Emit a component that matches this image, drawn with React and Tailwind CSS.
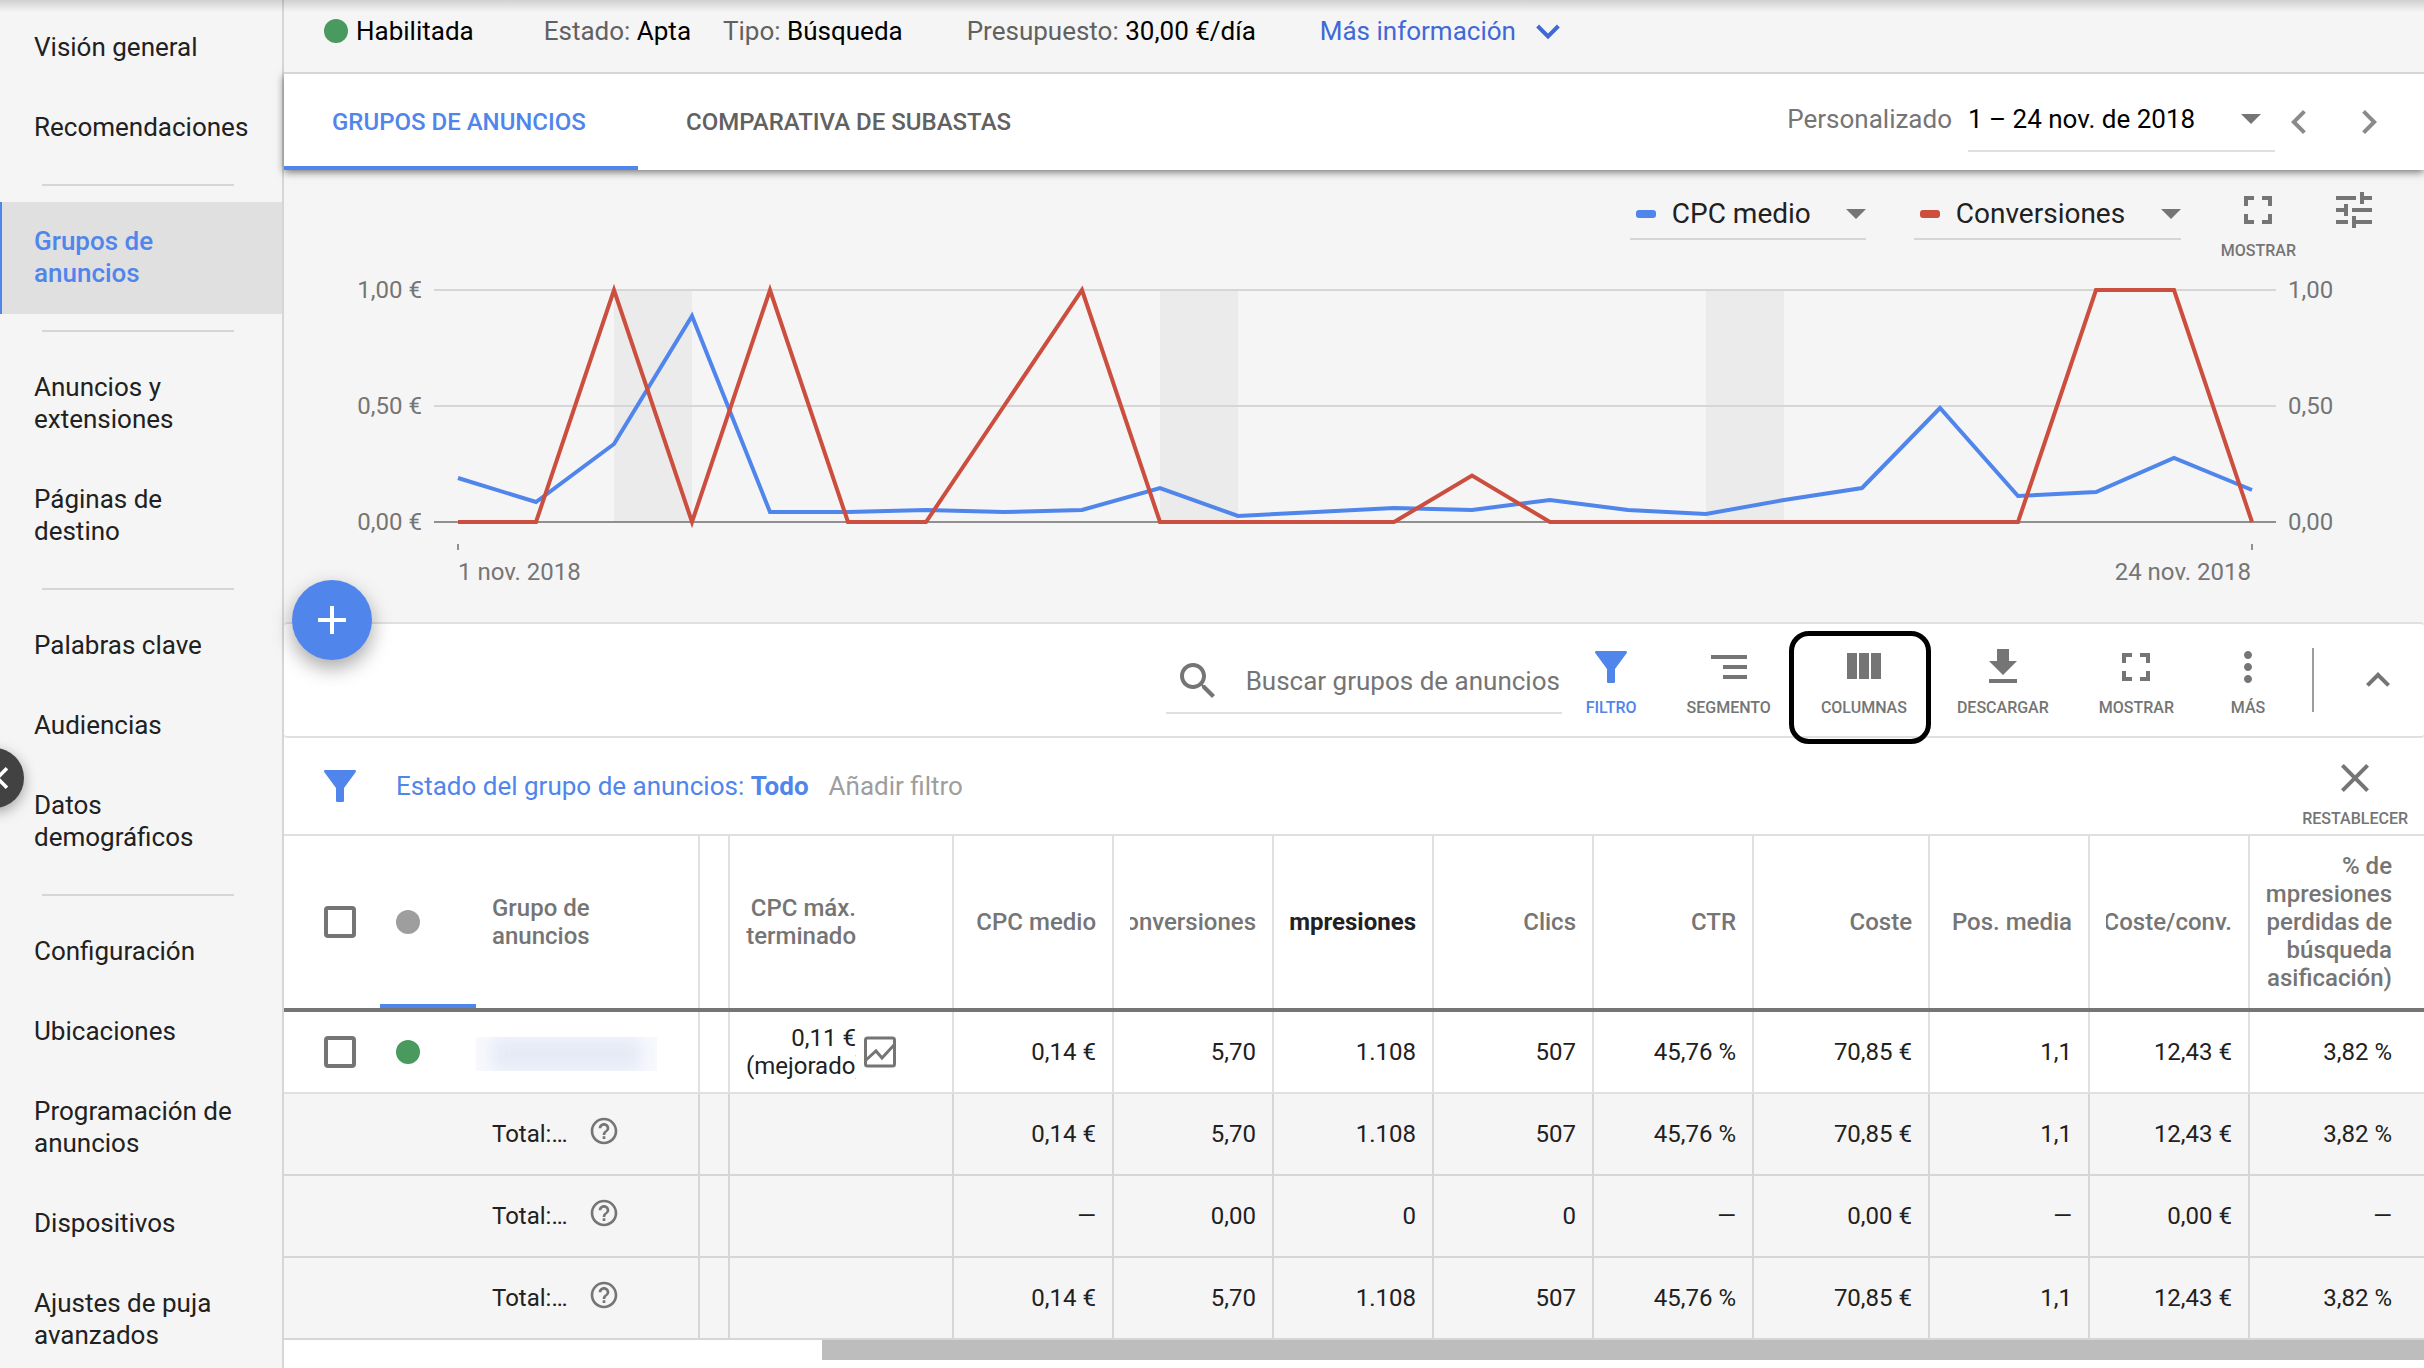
import React from 'react';

const icons = {
  tune: "M3 17v2h6v-2H3zM3 5v2h10V5H3zm10 16v-2h8v-2h-8v-2h-2v6h2zM7 9v2H3v2h4v2h2V9H7zm14 4v-2H11v2h10zm-6-4h2V7h4V5h-4V3h-2v6z",
  fullscreen: "M7 14H5v5h5v-2H7v-3zm-2-4h2V7h3V5H5v5zm12 7h-3v2h5v-5h-2v3zM14 5v2h3v3h2V5h-5z",
  search: "M15.5 14h-.79l-.28-.27C15.41 12.59 16 11.11 16 9.5 16 5.91 13.09 3 9.5 3S3 5.91 3 9.5 5.91 16 9.5 16c1.61 0 3.09-.59 4.23-1.57l.27.28v.79l5 4.99L20.49 19l-4.99-5zm-6 0C7.01 14 5 11.99 5 9.5S7.01 5 9.5 5 14 7.01 14 9.5 11.99 14 9.5 14z",
  help: "M11 18h2v-2h-2v2zm1-16C6.48 2 2 6.48 2 12s4.48 10 10 10 10-4.48 10-10S17.52 2 12 2zm0 18c-4.41 0-8-3.59-8-8s3.59-8 8-8 8 3.59 8 8-3.59 8-8 8zm0-14c-2.21 0-4 1.79-4 4h2c0-1.1.9-2 2-2s2 .9 2 2c0 2-3 1.75-3 5h2c0-2.25 3-2.5 3-5 0-2.21-1.79-4-4-4z",
  more: "M12 8c1.1 0 2-.9 2-2s-.9-2-2-2-2 .9-2 2 .9 2 2 2zm0 2c-1.1 0-2 .9-2 2s.9 2 2 2 2-.9 2-2-.9-2-2-2zm0 6c-1.1 0-2 .9-2 2s.9 2 2 2 2-.9 2-2-.9-2-2-2z",
  close: "M19 6.41L17.59 5 12 10.59 6.41 5 5 6.41 10.59 12 5 17.59 6.41 19 12 13.41 17.59 19 19 17.59 13.41 12z",
  left: "M15.41 7.41L14 6l-6 6 6 6 1.41-1.41L10.83 12z",
  right: "M10 6L8.59 7.41 13.17 12l-4.58 4.59L10 18l6-6z",
  up: "M7.41 15.41L12 10.83l4.59 4.58L18 14l-6-6-6 6z",
  add: "M19 13h-6v6h-2v-6H5v-2h6V5h2v6h6v2z",
  download: "M19 9h-4V3H9v6H5l7 7 7-7zM5 18v2h14v-2H5z",
  columns: "M3.500 5h5v13h-5zM9.500 5h5v13h-5zM15.500 5h5v13h-5z",
  segment: "M3 6h18v2H3zM9 11h12v2H9zM9 16h12v2H9z",
  filter: "M4.6 4h14.8c.6 0 .8.6.4 1.1L14 13v6.2c0 .5-.3.8-.8.8h-2.4c-.5 0-.8-.3-.8-.8V13L4.200 5.100C3.800 4.600 4 4 4.600 4z",
}

const Icon = ({ name, className = "size-12" }) => (
  <svg viewBox="0 0 24 24" fill="currentColor" className={`shrink-0 ${className}`} aria-hidden="true">
    <path d={icons[name]} />
  </svg>
)

const Triangle = () => (
  <svg viewBox="0 0 20 10" className="pointer-events-none absolute right-0 h-[10px] w-5" fill="#757575" aria-hidden="true">
    <path d="M0 0h20L10 10z" />
  </svg>
)

const menu = [
  ["Visión general", "Recomendaciones"],
  ["Grupos de anuncios"],
  ["Anuncios y extensiones", "Páginas de destino"],
  ["Palabras clave", "Audiencias", "Datos demográficos"],
  ["Configuración", "Ubicaciones", "Programación de anuncios", "Dispositivos", "Ajustes de puja avanzados"],
]

const Sidebar = () => (
  <nav className="relative w-[284px] shrink-0 border-r-2 border-[#d6d6d6] pt-2">
    {menu.map((group, i) => (
      <div key={i}>
        {i > 0 && <hr className="my-4 mr-12 ml-[42px] border-t-2 border-[#d6d6d6]" />}
        {group.map((item) => (
          <a
            key={item}
            href="#"
            className={item === "Grupos de anuncios"
              ? "block border-l-2 border-[#5085ec] bg-[#e0e0e0] pt-[23px] pr-12 pb-[25px] pl-8 font-medium text-[#5085ec]"
              : "block pt-[23px] pr-12 pb-[25px] pl-[34px]"}
          >
            {item}
          </a>
        ))}
      </div>
    ))}
    <button aria-label="Contraer menú" className="absolute top-[748px] -left-9 flex size-[60px] items-center justify-end rounded-full bg-[#424242] text-white shadow-[0_4px_14px_rgba(0,0,0,0.35)]">
      <Icon name="left" className="size-11" />
    </button>
  </nav>
)

const InfoBar = () => (
  <div className="relative z-20 flex h-[74px] items-center border-b-2 border-[#d6d6d6] bg-[#f5f5f5] pb-2.5 pl-10 text-black">
    <span className="mr-2 size-6 rounded-full bg-[#489a5f]"></span>
    <span className="mr-[70px]">Habilitada</span>
    <span className="mr-8"><span className="text-[#616161]">Estado:</span> Apta</span>
    <span className="mr-16"><span className="text-[#616161]">Tipo:</span> Búsqueda</span>
    <span className="mr-16"><span className="text-[#616161]">Presupuesto:</span> 30,00 €/día</span>
    <button className="flex items-center gap-2 text-[#4069d6]">
      Más información
      <svg viewBox="0 0 24 24" className="size-12" fill="none" stroke="currentColor" strokeWidth="2" aria-hidden="true">
        <path d="M6.800 9.500l5.200 5.200 5.200-5.200" />
      </svg>
    </button>
  </div>
)

const Tabs = () => (
  <div className="relative z-10 flex h-24 justify-between bg-white shadow-[0_2px_8px_rgba(0,0,0,0.55)]">
    <div className="flex text-2xl font-medium">
      <a href="#" className="flex w-[354px] items-center border-b-4 border-[#5085ec] pt-1 pl-12 text-[#5085ec]">GRUPOS DE ANUNCIOS</a>
      <a href="#" className="flex items-center px-12 text-[#616161]">COMPARATIVA DE SUBASTAS</a>
    </div>
    <div className="flex items-start pt-3 pr-[31px] text-[#757575]">
      <label htmlFor="fechas" className="mr-4 leading-[66px]">Personalizado</label>
      <div className="relative flex h-[66px] w-[307px] items-center border-b-2 border-[#e0e0e0] pt-0.5">
        <select id="fechas" className="w-full appearance-none bg-transparent text-black">
          <option>1 – 24 nov. de 2018</option>
        </select>
        <span className="absolute right-3.5 flex h-[10px] w-5"><Triangle /></span>
      </div>
      <div className="flex gap-[22px] pt-3 text-[#8a8a8a]">
        <button aria-label="Anterior"><Icon name="left" /></button>
        <button aria-label="Siguiente"><Icon name="right" /></button>
      </div>
    </div>
  </div>
)

// label under icon button used in the chart header and the toolbar
const IconButton = ({ icon, label, className = "text-[#757575]", children }) => (
  <button className={`relative flex min-w-12 flex-col items-center gap-[7px] ${className}`}>
    <Icon name={icon} />
    <span className="text-base leading-5 font-medium">{label}</span>
    {children}
  </button>
)

const MetricSelect = ({ label, color, width }) => (
  <div className={`relative mt-1 flex h-[50px] items-center border-b-2 border-[#d6d6d6] pl-1.5 ${width}`}>
    <span className={`mr-4 h-2 w-5 shrink-0 rounded-[3px] ${color}`}></span>
    <select aria-label="Métrica" className="w-full appearance-none bg-transparent text-[28px] text-[#212121]">
      <option>{label}</option>
    </select>
    <Triangle />
  </div>
)

const cpc = [204, 228, 170, 42, 238, 238, 236, 238, 236, 214, 242, 238, 234, 236, 226, 236, 240, 226, 214, 134, 222, 218, 184, 216]
const conv = [0, 0, 1, 0, 1, 0, 0, 0.5, 1, 0, 0, 0, 0, 0.2, 0, 0, 0, 0, 0, 0, 0, 1, 1, 0]
const x = (i) => 174 + i * 78

const Chart = () => (
  <section className="h-[452px]">
    <div className="flex h-[104px] items-start justify-end pt-4 pr-[46px]">
      <MetricSelect label="CPC medio" color="bg-[#5085ec]" width="mr-12 w-[236px]" />
      <MetricSelect label="Conversiones" color="bg-[#cb4e3f]" width="mr-10 w-[267px]" />
      <IconButton icon="fullscreen" label="MOSTRAR" className="mr-[34px] text-[#757575]" />
      <button aria-label="Ajustar gráfico" className="text-[#757575]"><Icon name="tune" /></button>
    </div>
    <svg viewBox="0 0 2140 348" className="block h-auto w-full" fontSize="24">
      {[2, 9, 16].map((i) => <rect key={i} x={x(i)} y="16" width="78" height="232" fill="#ebebeb" />)}
      <path d="M150 16H1992M150 132H1992" stroke="#d6d6d6" strokeWidth="2" />
      <path d="M150 248H1992" stroke="#8f8f8f" strokeWidth="2" />
      <path d="M174 270v6M1968 270v6" stroke="#8f8f8f" strokeWidth="2" />
      <polyline points={cpc.map((y, i) => `${x(i)},${y}`).join(" ")} fill="none" stroke="#5085ec" strokeWidth="4" />
      <polyline points={conv.map((v, i) => `${x(i)},${248 - v * 232}`).join(" ")} fill="none" stroke="#cb4e3f" strokeWidth="4" />
      <g fill="#757575">
        {["1,00", "0,50", "0,00"].map((t, i) => (
          <React.Fragment key={t}>
            <text x="138" y={24 + i * 116} textAnchor="end">{t} €</text>
            <text x="2004" y={24 + i * 116}>{t}</text>
          </React.Fragment>
        ))}
        <text x="174" y="306">1 nov. 2018</text>
        <text x="1967" y="306" textAnchor="end">24 nov. 2018</text>
      </g>
    </svg>
  </section>
)

const Toolbar = () => (
  <div className="relative flex h-[116px] items-center justify-end rounded border-y-2 border-[#e0e0e0] bg-white pr-[22px]">
    <button aria-label="Nuevo grupo de anuncios" className="absolute -top-11 left-2 flex size-20 items-center justify-center rounded-full bg-[#5085ec] text-white shadow-[0_8px_20px_rgba(0,0,0,0.35)]">
      <Icon name="add" />
    </button>
    <div className="mr-6 flex h-[68px] w-[396px] items-center border-b-2 border-[#e0e0e0] pt-1 pl-2 text-[#757575]">
      <Icon name="search" />
      <input type="text" aria-label="Buscar" placeholder="Buscar grupos de anuncios" className="ml-6 w-full min-w-0 bg-transparent outline-none placeholder:text-[#757575]" />
    </div>
    <div className="flex gap-[50px]">
      <IconButton icon="filter" label="FILTRO" className="text-[#5085ec]" />
      <IconButton icon="segment" label="SEGMENTO" />
      <IconButton icon="columns" label="COLUMNAS">
        <span className="absolute -top-3 -right-6 -bottom-[26px] -left-8 z-10 rounded-[20px] border-[5px] border-black"></span>
      </IconButton>
      <IconButton icon="download" label="DESCARGAR" />
      <IconButton icon="fullscreen" label="MOSTRAR" />
      <IconButton icon="more" label="MÁS" />
    </div>
    <span className="mx-10 h-16 w-0.5 bg-[#9e9e9e]"></span>
    <button aria-label="Contraer" className="text-[#757575]"><Icon name="up" /></button>
  </div>
)

const FilterBar = () => (
  <div className="flex h-[98px] items-center border-b-2 border-[#e0e0e0] bg-white pr-4 pl-8">
    <Icon name="filter" className="size-12 text-[#5085ec]" />
    <button className="ml-8 text-[#5085ec]">Estado del grupo de anuncios: <b>Todo</b></button>
    <button className="ml-5 text-[#9e9e9e]">Añadir filtro</button>
    <span className="ml-auto pt-2.5"><IconButton icon="close" label="RESTABLECER" /></span>
  </div>
)

const columns = [
  { lines: ["CPC medio"] },
  { lines: ["Conversiones"] },
  { lines: ["Impresiones"], bold: true },
  { lines: ["Clics"] },
  { lines: ["CTR"] },
  { lines: ["Coste"] },
  { lines: ["Pos. media"] },
  { lines: ["Coste/conv."] },
  { lines: ["% de", "impresiones", "perdidas de", "búsqueda", "(clasificación)"], last: true },
]

const values = ["0,14 €", "5,70", "1.108", "507", "45,76 %", "70,85 €", "1,1", "12,43 €", "3,82 %"]
const empty = ["—", "0,00", "0", "0", "—", "0,00 €", "—", "0,00 €", "—"]

const Values = ({ row }) => row.map((v, i) => (
  <td key={i} className={i === row.length - 1 ? "pr-8 text-right" : "border-r-2 border-inherit pr-4 text-right"}>{v}</td>
))

const Check = ({ label }) => (
  <input type="checkbox" aria-label={label} className="ml-10 block size-8 appearance-none rounded border-4 border-[#757575] bg-white" />
)

const Table = () => (
  <table className="w-full table-fixed border-collapse text-2xl leading-7">
    <colgroup>
      <col className="w-24" />
      <col className="w-24" />
      <col className="w-[223px]" />
      <col className="w-[30px]" />
      <col className="w-56" />
      <col className="w-40" />
      <col className="w-40" />
      <col className="w-40" />
      <col className="w-40" />
      <col className="w-40" />
      <col className="w-44" />
      <col className="w-40" />
      <col className="w-40" />
      <col />
    </colgroup>
    <thead>
      <tr className="h-[174px] border-b-4 border-[#757575] text-[#757575]">
        <th><Check label="Seleccionar todo" /></th>
        <th className="relative">
          <span className="ml-4 block size-6 rounded-full bg-[#9e9e9e]"></span>
          <span className="absolute inset-x-0 bottom-0 h-1 bg-[#5085ec]"></span>
        </th>
        <th className="border-r-2 border-r-[#e0e0e0] pr-24 pl-4 text-left font-medium">Grupo de anuncios</th>
        <th className="border-r-2 border-r-[#e0e0e0]"></th>
        <th className="border-r-2 border-r-[#e0e0e0] pr-24 text-right font-medium">CPC máx.<br />terminado</th>
        {columns.map((col) => (
          <th key={col.lines[0]} className={col.last ? "pr-8 pl-4" : "border-r-2 border-r-[#e0e0e0] px-4"}>
            {/* long names are cut on the left */}
            {col.lines.map((line) => (
              <div key={line} className={`flex justify-end overflow-hidden whitespace-nowrap ${col.bold ? "font-bold text-[#212121]" : "font-medium"}`}>
                <span className="shrink-0">{line}</span>
              </div>
            ))}
          </th>
        ))}
      </tr>
    </thead>
    <tbody>
      <tr className="h-[83px] border-b-2 border-[#e0e0e0]">
        <td><Check label="Seleccionar grupo de anuncios" /></td>
        <td><span className="ml-4 block size-6 rounded-full bg-[#489a5f]"></span></td>
        <td className="border-r-2 border-inherit pt-1">
          <div className="h-[34px] w-[181px] overflow-hidden bg-[#f8f9fd] px-4">
            <div className="h-full rounded bg-[#e5eaf6] blur-[8px]"></div>
          </div>
        </td>
        <td className="border-r-2 border-inherit"></td>
        <td className="border-r-2 border-inherit pl-4">
          <div className="flex items-center gap-2">
            <div className="w-[110px] overflow-hidden">
              <div className="text-right">0,11 €</div>
              <div>(mejorado)</div>
            </div>
            <svg viewBox="0 0 32 32" className="size-8" fill="none" stroke="#757575" strokeWidth="3" aria-hidden="true">
              <rect x="1.500" y="2" width="29" height="28" rx="2" />
              <path d="M2 24l10-9 6 7L30 9" />
            </svg>
          </div>
        </td>
        <Values row={values} />
      </tr>
      {[values, empty, values].map((row, i) => (
        <tr key={i} className="h-[82px] border-b-2 border-[#d6d6d6] bg-[#f5f5f5]">
          <td></td>
          <td></td>
          <td className="border-r-2 border-inherit pl-4">
            <div className="flex items-center">
              <span className="w-24">Total:…</span>
              <button aria-label="Ayuda" className="pb-1.5 text-[#757575]"><Icon name="help" className="size-8" /></button>
            </div>
          </td>
          <td className="border-r-2 border-inherit"></td>
          <td className="border-r-2 border-inherit"></td>
          <Values row={row} />
        </tr>
      ))}
    </tbody>
  </table>
)

const App = () => {
  return (
    <div className="relative flex h-screen overflow-hidden bg-[#f5f5f5] font-[Roboto,sans-serif] text-[26px] leading-8 text-[#212121]">
      <Sidebar />
      <main className="flex min-w-0 flex-1 flex-col">
        <InfoBar />
        <Tabs />
        <Chart />
        <Toolbar />
        <FilterBar />
        <div className="flex-1 bg-white">
          <Table />
          <div className="ml-[538px] h-5 bg-[#bdbdbd]"></div>
        </div>
      </main>
      <div className="pointer-events-none absolute inset-x-0 top-0 z-30 h-3 bg-linear-to-b from-black/15 to-transparent"></div>
    </div>
  );
};

export default App;
